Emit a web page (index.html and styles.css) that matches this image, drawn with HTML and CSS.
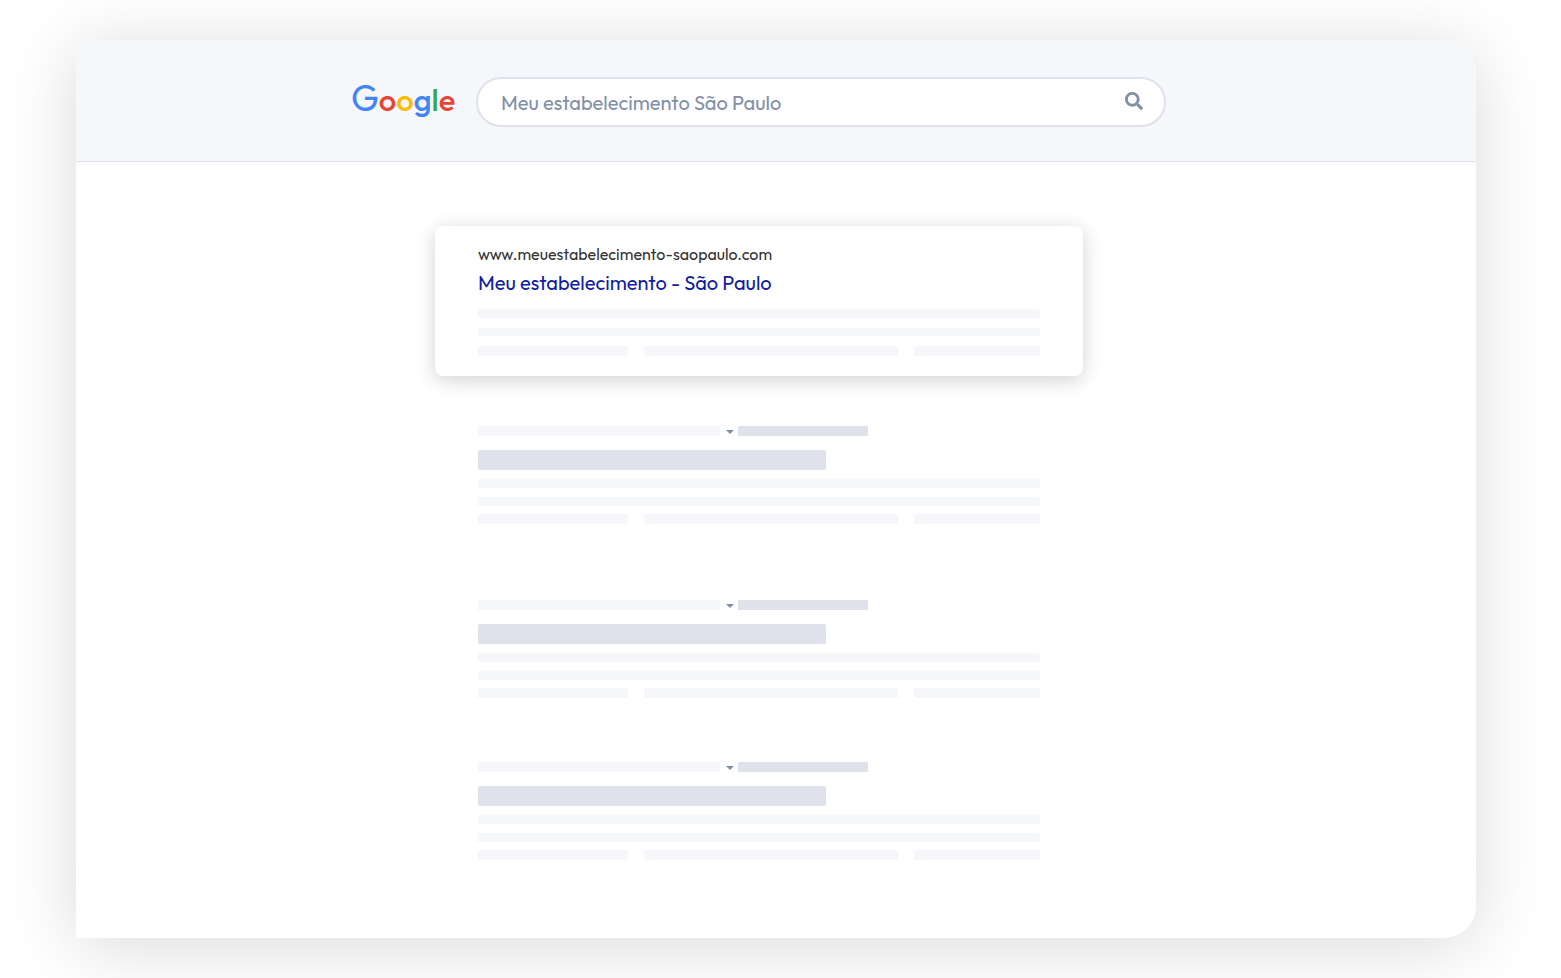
FILE: index.html
```html
<!DOCTYPE html>
<html lang="pt-BR">
<head>
    <meta charset="UTF-8">
    <meta name="viewport" content="width=device-width, initial-scale=1.0">
    <title>Meu estabelecimento São Paulo</title>
    <link rel="stylesheet" href="styles.css">
</head>
<body>

    <div class="window">
        <header class="topbar">
            <form class="search-form" action="/search" method="get">
                <a class="logo" href="/" aria-label="Google">
                    <svg viewBox="0 0 104 40" aria-hidden="true">
                        <text class="logo-text" x="-1" y="29"><tspan class="blue capital">G</tspan><tspan class="red">o</tspan><tspan class="yellow">o</tspan><tspan class="blue">g</tspan><tspan class="green">l</tspan><tspan class="red">e</tspan></text>
                    </svg>
                </a>
                <div class="search-box">
                    <input type="text" name="q" aria-label="Pesquisar" value="Meu estabelecimento São Paulo">
                    <button type="submit" aria-label="Buscar">
                        <svg viewBox="0 0 512 512" aria-hidden="true">
                            <path d="M505 442.700L405.300 343c-4.500-4.500-10.600-7-17-7H372c27.600-35.300 44-79.700 44-128C416 93.100 322.900 0 208 0S0 93.100 0 208s93.100 208 208 208c48.300 0 92.700-16.400 128-44v16.300c0 6.400 2.500 12.500 7 17l99.700 99.700c9.400 9.400 24.600 9.400 33.900 0l28.300-28.300c9.400-9.400 9.400-24.600.1-34zM208 336c-70.700 0-128-57.200-128-128 0-70.700 57.200-128 128-128 70.700 0 128 57.200 128 128 0 70.700-57.200 128-128 128z"/>
                        </svg>
                    </button>
                </div>
            </form>
        </header>

        <main class="results">
            <!-- Highlighted result -->
            <article class="result card">
                <cite class="url">www.meuestabelecimento-saopaulo.com</cite>
                <h3><a href="#">Meu estabelecimento - São Paulo</a></h3>
                <div class="lines">
                    <div class="line"></div>
                    <div class="line"></div>
                    <div class="links"><span></span><span></span><span></span></div>
                </div>
            </article>

            <!-- Placeholder results -->
            <article class="result">
                <div class="source"><span class="address"></span><span class="arrow"></span><span class="tag"></span></div>
                <div class="heading"></div>
                <div class="lines">
                    <div class="line"></div>
                    <div class="line"></div>
                    <div class="links"><span></span><span></span><span></span></div>
                </div>
            </article>

            <article class="result spaced">
                <div class="source"><span class="address"></span><span class="arrow"></span><span class="tag"></span></div>
                <div class="heading"></div>
                <div class="lines">
                    <div class="line"></div>
                    <div class="line"></div>
                    <div class="links"><span></span><span></span><span></span></div>
                </div>
            </article>

            <article class="result">
                <div class="source"><span class="address"></span><span class="arrow"></span><span class="tag"></span></div>
                <div class="heading"></div>
                <div class="lines">
                    <div class="line"></div>
                    <div class="line"></div>
                    <div class="links"><span></span><span></span><span></span></div>
                </div>
            </article>
        </main>
    </div>

</body>
</html>
```
FILE: styles.css
```css
* {
    box-sizing: border-box;
    margin: 0;
    padding: 0;
}
body {
    font-family: Outfit, Lato, sans-serif;
    background-color: #ffffff;
    min-height: 100vh;
    display: flex;
    padding: 40px 85px 40px 76px;
}
.window {
    flex: 1;
    min-width: 0;
    background-color: #ffffff;
    border-radius: 0 32px 32px 0;
    box-shadow: 0 8px 72px rgba(0, 0, 0, 0.15);
}

/* Header */
.topbar {
    background-color: #f5f7fb;
    border-bottom: 1px solid #e0e3eb;
    border-radius: 0 32px 0 0;
    padding: 37px 34px 34px 0;
}
.search-form {
    display: flex;
    align-items: center;
    gap: 20px;
    width: 100%;
    max-width: 814px;
    margin: 0 auto;
}
.logo {
    flex: none;
    width: 104px;
    height: 40px;
}
.logo svg {
    display: block;
    width: 100%;
    height: 100%;
    overflow: visible;
}
.logo-text {
    font-family: Outfit, Lato, sans-serif;
    font-size: 31px;
    font-weight: 500;
}
.capital {
    font-size: 36px;
    font-weight: 400;
}
.blue {
    fill: #4285f4;
}
.red {
    fill: #ea4335;
}
.yellow {
    fill: #fbbc05;
}
.green {
    fill: #34a853;
}
.search-box {
    flex: 1;
    min-width: 0;
    display: flex;
    align-items: center;
    height: 50px;
    padding: 0 21px 0 23px;
    background-color: #ffffff;
    border: 2px solid #dfe2ec;
    border-radius: 25px;
}
.search-box input {
    flex: 1;
    min-width: 0;
    height: 100%;
    border: none;
    outline: none;
    background: none;
    font-family: inherit;
    font-size: 20px;
    color: #8090a8;
}
.search-box button {
    width: 18px;
    height: 22px;
    padding-bottom: 3px;
    border: none;
    background: none;
    cursor: pointer;
}
.search-box svg {
    display: block;
    width: 18px;
    height: 18px;
    fill: #8090a8;
}

/* Results */
.results {
    display: flex;
    flex-direction: column;
    align-items: center;
    padding: 64px 34px 77px 0;
}
.result {
    width: 100%;
    max-width: 562px;
    margin-bottom: 64px;
}
.result.spaced {
    margin-top: 12px;
}
.result.card {
    max-width: 648px;
    padding: 16px 43px 20px;
    margin-bottom: 50px;
    background-color: #ffffff;
    border-radius: 8px;
    box-shadow: 0 4px 20px rgba(0, 0, 0, 0.18);
}
.result:last-child {
    margin-bottom: 0;
}
.url {
    display: block;
    font-size: 16px;
    line-height: 25px;
    font-style: normal;
    color: #333333;
}
.result h3 {
    margin-bottom: 10px;
    font-size: 20px;
    line-height: 32px;
    font-weight: 400;
}
.result h3 a {
    color: #1020a0;
    text-decoration: none;
}

/* Placeholder bars */
.source {
    display: flex;
    align-items: center;
    gap: 6px;
    height: 10px;
    margin-bottom: 14px;
}
.address {
    width: 242px;
    height: 10px;
    background-color: #f5f7fb;
}
.arrow {
    margin-top: 2px;
    border: 4px solid transparent;
    border-top-color: #8090a8;
    border-bottom: none;
}
.tag {
    width: 130px;
    height: 10px;
    margin-left: -2px;
    background-color: #dfe2eb;
}
.heading {
    width: 348px;
    max-width: 100%;
    height: 20px;
    margin-bottom: 9px;
    border-radius: 2px;
    background-color: #dfe2eb;
}
.line {
    height: 9px;
    margin-bottom: 9px;
    border-radius: 2px;
    background-color: #f5f7fb;
}
.line + .line {
    margin-bottom: 8px;
}
.card .line {
    margin-bottom: 10px;
}
.card .line + .line {
    height: 8px;
}
.links {
    display: grid;
    grid-template-columns: 150fr 254fr 126fr;
    gap: 16px;
}
.links span {
    height: 10px;
    border-radius: 2px;
    background-color: #f5f7fb;
}
```
